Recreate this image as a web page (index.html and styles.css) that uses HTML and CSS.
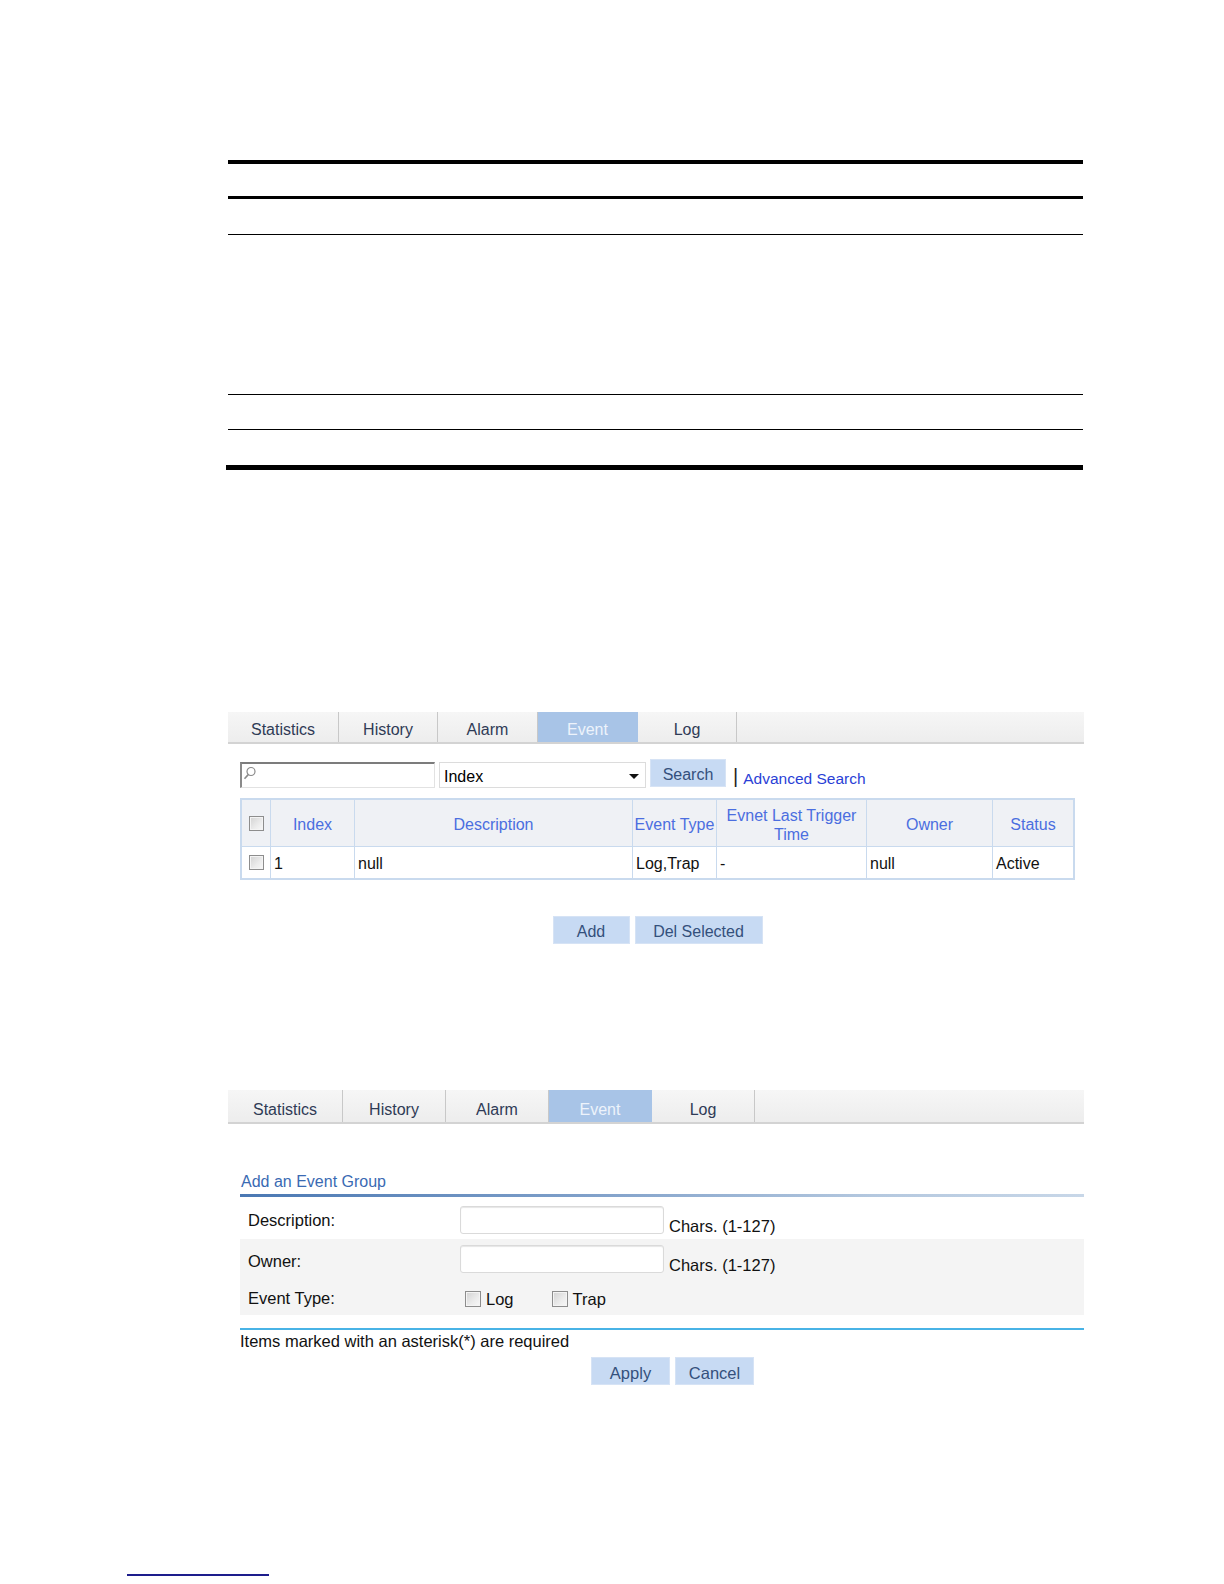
FILE: index.html
```html
<!DOCTYPE html>
<html lang="en">
<head>
<meta charset="utf-8">
<title>RMON Event</title>
<link rel="stylesheet" href="styles.css">
</head>
<body>
<div class="page">
  <div class="doc-rules">
    <div class="rule r1"></div>
    <div class="rule r2"></div>
    <div class="rule r3"></div>
    <div class="rule r4"></div>
    <div class="rule r5"></div>
    <div class="rule r6"></div>
  </div>

  <section class="panel panel-list">
    <div class="tabs tabs-a">
      <div class="tab">Statistics</div>
      <div class="tab">History</div>
      <div class="tab">Alarm</div>
      <div class="tab active">Event</div>
      <div class="tab">Log</div>
      <div class="tab-rest"></div>
    </div>

    <div class="search-row">
      <div class="search-input">
        <svg class="mag" width="14" height="15" viewBox="0 0 14 15"><circle cx="8" cy="5.5" r="4" fill="none" stroke="#8a8a8a" stroke-width="1.2"/><line x1="5.2" y1="8.6" x2="1.5" y2="12.8" stroke="#8a8a8a" stroke-width="1.6"/></svg>
      </div>
      <div class="select">
        <span>Index</span>
        <span class="caret"></span>
      </div>
      <div class="btn btn-search">Search</div>
      <span class="bar">|</span>
      <span class="adv">Advanced Search</span>
    </div>

    <div class="grid">
      <div class="grow head">
        <div class="cell c-chk"><span class="cb"></span></div>
        <div class="cell c-idx">Index</div>
        <div class="cell c-desc">Description</div>
        <div class="cell c-type">Event Type</div>
        <div class="cell c-time">Evnet Last Trigger<br>Time</div>
        <div class="cell c-own">Owner</div>
        <div class="cell c-stat">Status</div>
      </div>
      <div class="grow body">
        <div class="cell c-chk"><span class="cb"></span></div>
        <div class="cell c-idx">1</div>
        <div class="cell c-desc">null</div>
        <div class="cell c-type">Log,Trap</div>
        <div class="cell c-time">-</div>
        <div class="cell c-own">null</div>
        <div class="cell c-stat">Active</div>
      </div>
    </div>

    <div class="actions actions-a">
      <div class="btn btn-add">Add</div>
      <div class="btn btn-del">Del Selected</div>
    </div>
  </section>

  <section class="panel panel-form">
    <div class="tabs tabs-b">
      <div class="tab">Statistics</div>
      <div class="tab">History</div>
      <div class="tab">Alarm</div>
      <div class="tab active">Event</div>
      <div class="tab">Log</div>
      <div class="tab-rest"></div>
    </div>

    <div class="form">
      <div class="form-title">Add an Event Group</div>
      <div class="title-rule"></div>
      <div class="frow row-desc">
        <div class="flabel">Description:</div>
        <div class="ffield"><div class="tinput"></div><span class="hint">Chars. (1-127)</span></div>
      </div>
      <div class="frow alt row-owner">
        <div class="flabel">Owner:</div>
        <div class="ffield"><div class="tinput"></div><span class="hint">Chars. (1-127)</span></div>
      </div>
      <div class="frow alt row-type">
        <div class="flabel">Event Type:</div>
        <div class="checks">
          <span class="cb big"></span><span class="clabel">Log</span>
          <span class="cb big second"></span><span class="clabel">Trap</span>
        </div>
      </div>
      <div class="form-end"></div>
      <div class="note">Items marked with an asterisk(*) are required</div>
      <div class="actions actions-b">
        <div class="btn btn-apply">Apply</div>
        <div class="btn btn-cancel">Cancel</div>
      </div>
    </div>
  </section>

  <div class="footnote-rule"></div>
</div>
</body>
</html>
```

FILE: styles.css
```css
* { box-sizing: border-box; }
html, body { margin: 0; padding: 0; background: #fff; }
body {
  font-family: "Liberation Sans", Arial, sans-serif;
  font-size: 16px;
  color: #111;
}
.page { width: 1224px; height: 1584px; overflow: hidden; }

/* document table rules */
.doc-rules { margin: 160px 0 0 228px; width: 855px; }
.rule { background: #000; }
.r1 { height: 4px; }
.r2 { height: 3px; margin-top: 32px; }
.r3 { height: 1px; margin-top: 35px; }
.r4 { height: 1px; margin-top: 159px; }
.r5 { height: 1px; margin-top: 34px; }
.r6 { height: 5px; margin-top: 35px; margin-left: -2px; width: 857px; }

/* panels */
.panel { margin-left: 228px; width: 856px; }
.panel-list { margin-top: 242px; }
.panel-form { margin-top: 146px; }

/* tabs */
.tabs {
  display: flex;
  height: 32px;
  background: linear-gradient(#f6f6f6, #ededed);
  border-bottom: 2px solid #d3d3d3;
}
.tab {
  display: flex;
  align-items: center;
  justify-content: center;
  border-right: 1px solid #c8c8c8;
  color: #2f3b56;
  font-size: 16px;
  padding-top: 5px;
}
.tab.active { background: #a8c4e7; color: #edf3fb; border-right-color: #a8c4e7; }
.tab-rest { flex: 1; }
.tabs-a .tab { width: 100px; }
.tabs-a .tab:nth-child(1) { width: 111px; }
.tabs-a .tab:nth-child(2) { width: 99px; }
.tabs-a .tab:nth-child(5) { width: 99px; }
.tabs-b { height: 34px; }
.tabs-b .tab { width: 103px; padding-top: 7px; }
.tabs-b .tab:nth-child(1) { width: 115px; }

/* search row */
.search-row {
  display: flex;
  align-items: flex-start;
  margin: 15px 0 0 12px;
  height: 29px;
}
.search-input {
  width: 195px;
  height: 26px;
  margin-top: 3px;
  background: #fff;
  border-top: 2px solid #7c7c7c;
  border-left: 2px solid #8a8a8a;
  border-right: 1px solid #e2e2e2;
  border-bottom: 1px solid #e2e2e2;
  position: relative;
}
.mag { position: absolute; left: 1px; top: 2px; }
.select {
  width: 207px;
  height: 26px;
  margin: 3px 0 0 4px;
  border: 1px solid #dcdcdc;
  background: #fff;
  display: flex;
  align-items: center;
  justify-content: space-between;
  padding: 3px 6px 0 4px;
  color: #000;
}
.caret {
  width: 0; height: 0;
  border-left: 5px solid transparent;
  border-right: 5px solid transparent;
  border-top: 5px solid #111;
}
.btn {
  display: flex;
  align-items: center;
  justify-content: center;
  height: 28px;
  background: #c7daf3;
  border: 1px solid #d6e3f5;
  color: #34507c;
  font-size: 16px;
  padding-top: 4px;
}
.btn-search { width: 76px; margin-left: 4px; }
.bar { margin: 6px 0 0 7px; font-size: 20px; line-height: 22px; color: #222; }
.adv { margin: 11px 0 0 5px; color: #2a3fd6; line-height: 18px; font-size: 15.5px; }

/* grid table */
.grid {
  margin: 10px 0 0 12px;
  width: 835px;
  border: 2px solid #c9daee;
}
.grow { display: flex; }
.grow.head { height: 47px; background: #eff1f5; border-bottom: 1px solid #c9daee; }
.grow.body { height: 31px; background: #fff; }
.cell { border-right: 1px solid #c9daee; display: flex; align-items: center; }
.cell:last-child { border-right: none; }
.head .cell { justify-content: center; text-align: center; color: #4b6ee0; line-height: 19px; padding-top: 2px; }
.head .c-time { padding-top: 4px; }
.body .cell { padding-left: 3px; color: #111; padding-top: 2px; }
.body .c-chk { padding-left: 0; justify-content: center; padding-top: 0; }
.head .c-chk { padding-top: 0; }
.c-chk { width: 29px; justify-content: center; }
.c-idx { width: 84px; }
.c-desc { width: 278px; }
.c-type { width: 84px; }
.c-time { width: 150px; }
.c-own { width: 126px; }
.c-stat { flex: 1; }

.cb {
  display: inline-block;
  flex: none;
  width: 15px;
  height: 15px;
  border: 1px solid #8d8d8d;
  background: linear-gradient(135deg, #d2d2d2 0%, #ececec 60%, #f8f8f8 100%);
  box-shadow: inset 0 0 0 1px #f4f4f4;
}

/* buttons rows */
.actions { display: flex; gap: 5px; }
.actions-a { margin: 36px 0 0 12px; width: 835px; justify-content: center; }
.btn-add { width: 77px; }
.btn-del { width: 128px; }

/* form */
.form { margin-left: 12px; width: 844px; font-size: 16.5px; }
.form .btn { font-size: 16.5px; }
.form-title { margin-top: 48px; line-height: 20px; height: 20px; color: #3a6ab3; padding-left: 1px; font-size: 16px; }
.title-rule {
  margin-top: 2px;
  height: 3px;
  background: linear-gradient(90deg, #4a78b3 0%, #7e9fc9 40%, #b4c8df 75%, #c8d7e8 100%);
}
.frow { display: flex; align-items: flex-start; height: 38px; }
.frow.row-desc { height: 42px; }
.frow.alt { background: #f4f4f4; }
.flabel { width: 220px; padding-left: 8px; line-height: 19px; }
.row-desc .flabel { margin-top: 14px; }
.row-owner .flabel { margin-top: 13px; }
.row-type .flabel { margin-top: 12px; }
.ffield { display: flex; align-items: flex-end; }
.row-desc .ffield { margin-top: 9px; }
.row-owner .ffield { margin-top: 6px; }
.tinput {
  width: 204px;
  height: 28px;
  background: #fff;
  border: 1px solid #dadada;
  border-radius: 3px;
  box-shadow: inset 0 1px 1px #e6e6e6;
}
.hint { margin-left: 5px; line-height: 18px; margin-bottom: -1px; }
.checks { display: flex; align-items: center; padding-left: 5px; margin-top: 13px; height: 17px; }
.cb.big { width: 16px; height: 16px; }
.cb.second { margin-left: 38px; }
.clabel { margin-left: 5px; line-height: 19px; padding-top: 1px; }
.form-end { margin-top: 13px; height: 2px; background: #48b3e6; }
.note { margin-top: 2px; line-height: 18px; height: 18px; }
.actions-b { margin: 7px 0 0 0; padding-left: 351px; }
.btn-apply { width: 79px; }
.btn-cancel { width: 79px; }

.footnote-rule {
  margin: 189px 0 0 127px;
  width: 142px;
  height: 2px;
  background: #1d1d8c;
}
```
